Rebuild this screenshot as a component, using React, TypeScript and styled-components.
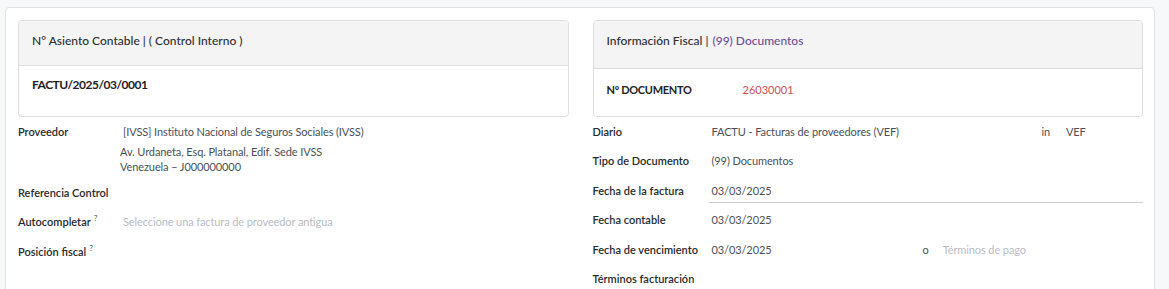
import React from "react";
import styled, { createGlobalStyle } from "styled-components";

const Global = createGlobalStyle`
  html, body { margin: 0; padding: 0; }
  body {
    background: #f7f8fa;
    font-family: Lato, "Noto Sans", sans-serif;
    color: #212529;
    overflow: hidden;
  }
`;

const Page = styled.div`
  padding: 7px 14px 0 5px;
  height: 289px;
  box-sizing: border-box;
  overflow: hidden;
`;

const Sheet = styled.div`
  background: #ffffff;
  border: 1px solid #dfe1e5;
  border-radius: 4px;
  padding: 12px 11px 20px 12px;
  min-height: 320px;
  box-sizing: border-box;
  display: grid;
  grid-template-columns: 1fr 1fr;
  column-gap: 24px;
`;

const Column = styled.div`
  display: flex;
  flex-direction: column;
`;

const Card = styled.div`
  border: 1px solid #dcdee2;
  border-radius: 4px;
  height: 97px;
  box-sizing: border-box;
  display: flex;
  flex-direction: column;
  overflow: hidden;
`;

const CardHeader = styled.div<{ $h: number }>`
  background: #f4f4f5;
  border-bottom: 1px solid #dcdee2;
  height: ${(p) => p.$h}px;
  box-sizing: border-box;
  padding: 0 13px ${(p) => (p.$h > 46 ? 9 : 5)}px;
  display: flex;
  align-items: center;
  font-size: 12px;
  font-weight: 500;
  color: #2b2f33;
`;

const Purple = styled.span`
  color: #6c4e96;
  margin-left: 4px;
`;

const CardBody = styled.div<{ $pb: number }>`
  flex: 1;
  padding: 0 13px ${(p) => p.$pb}px;
  display: flex;
  align-items: center;
`;

const Strong = styled.span`
  font-weight: 700;
  font-size: 12px;
  letter-spacing: -0.5px;
  color: #1d2125;
`;

const DocLabel = styled.span`
  font-weight: 700;
  color: #1d2125;
  font-size: 11px;
  letter-spacing: -0.3px;
  width: 136px;
`;

const DocNumber = styled.span`
  color: #d44c59;
  font-size: 11px;
`;

const Fields = styled.div`
  margin-top: 6.5px;
  display: flex;
  flex-direction: column;
  font-size: 11px;
  line-height: 15px;
`;

const Row = styled.div<{ $label: number }>`
  display: grid;
  grid-template-columns: ${(p) => p.$label}px 1fr;
  min-height: 29.5px;
  align-items: start;
`;

const Label = styled.div`
  font-weight: 600;
  color: #262a2e;
  white-space: nowrap;
`;

const Help = styled.sup`
  font-size: 8px;
  font-weight: 400;
  color: #495057;
  margin-left: 3px;
  vertical-align: top;
  position: relative;
  top: -3px;
`;

const Value = styled.div<{ $underline?: boolean }>`
  color: #4a5057;
  padding: 0 0 4px 3px;
  border-bottom: 1px solid ${(p) => (p.$underline ? "#c9ccd1" : "transparent")};
  margin-left: -3px;
  height: 20px;
  box-sizing: border-box;
  white-space: nowrap;
  letter-spacing: -0.1px;
`;

const Placeholder = styled.span`
  color: #b8bcc4;
`;

const Address = styled.div`
  color: #4a5057;
  margin: 0 0 11px -3px;
  letter-spacing: -0.1px;
`;

const Inline = styled.div`
  display: flex;
  align-items: flex-start;
  color: #4a5057;
  white-space: nowrap;
  letter-spacing: -0.1px;
`;

const Grow = styled.span<{ $w?: number }>`
  flex: ${(p) => (p.$w ? `0 0 ${p.$w}px` : "1")};
`;

const Sep = styled.span<{ $l: number; $r: number }>`
  margin: 0 ${(p) => p.$r}px 0 ${(p) => p.$l}px;
  color: #4a5057;
`;

export default function App() {
  return (
    <>
      <Global />
      <Page>
        <Sheet>
          <Column>
            <Card>
              <CardHeader $h={45}>Nº Asiento Contable | ( Control Interno )</CardHeader>
              <CardBody $pb={13}>
                <Strong>FACTU/2025/03/0001</Strong>
              </CardBody>
            </Card>
            <Fields>
              <Row $label={105}>
                <Label>Proveedor</Label>
                <div>
                  <Value>[IVSS] Instituto Nacional de Seguros Sociales (IVSS)</Value>
                  <Address>
                    Av. Urdaneta, Esq. Platanal, Edif. Sede IVSS
                    <br />
                    Venezuela – J000000000
                  </Address>
                </div>
              </Row>
              <Row $label={105}>
                <Label>Referencia Control</Label>
                <Value />
              </Row>
              <Row $label={105}>
                <Label>
                  Autocompletar<Help>?</Help>
                </Label>
                <Value>
                  <Placeholder>Seleccione una factura de proveedor antigua</Placeholder>
                </Value>
              </Row>
              <Row $label={105}>
                <Label>
                  Posición fiscal<Help>?</Help>
                </Label>
                <Value />
              </Row>
            </Fields>
          </Column>
          <Column>
            <Card>
              <CardHeader $h={48}>
                Información Fiscal |<Purple>(99) Documentos</Purple>
              </CardHeader>
              <CardBody $pb={7}>
                <DocLabel>Nº DOCUMENTO</DocLabel>
                <DocNumber>26030001</DocNumber>
              </CardBody>
            </Card>
            <Fields>
              <Row $label={119}>
                <Label>Diario</Label>
                <Inline>
                  <Grow>FACTU - Facturas de proveedores (VEF)</Grow>
                  <Sep $l={8} $r={16}>in</Sep>
                  <Grow $w={77}>VEF</Grow>
                </Inline>
              </Row>
              <Row $label={119}>
                <Label>Tipo de Documento</Label>
                <Value>(99) Documentos</Value>
              </Row>
              <Row $label={119}>
                <Label>Fecha de la factura</Label>
                <Value $underline>03/03/2025</Value>
              </Row>
              <Row $label={119}>
                <Label>Fecha contable</Label>
                <Value>03/03/2025</Value>
              </Row>
              <Row $label={119}>
                <Label>Fecha de vencimiento</Label>
                <Inline>
                  <Grow $w={203}>03/03/2025</Grow>
                  <Sep $l={8} $r={14}>o</Sep>
                  <Grow>
                    <Placeholder>Términos de pago</Placeholder>
                  </Grow>
                </Inline>
              </Row>
              <Row $label={119}>
                <Label>Términos facturación</Label>
                <Value />
              </Row>
            </Fields>
          </Column>
        </Sheet>
      </Page>
    </>
  );
}
